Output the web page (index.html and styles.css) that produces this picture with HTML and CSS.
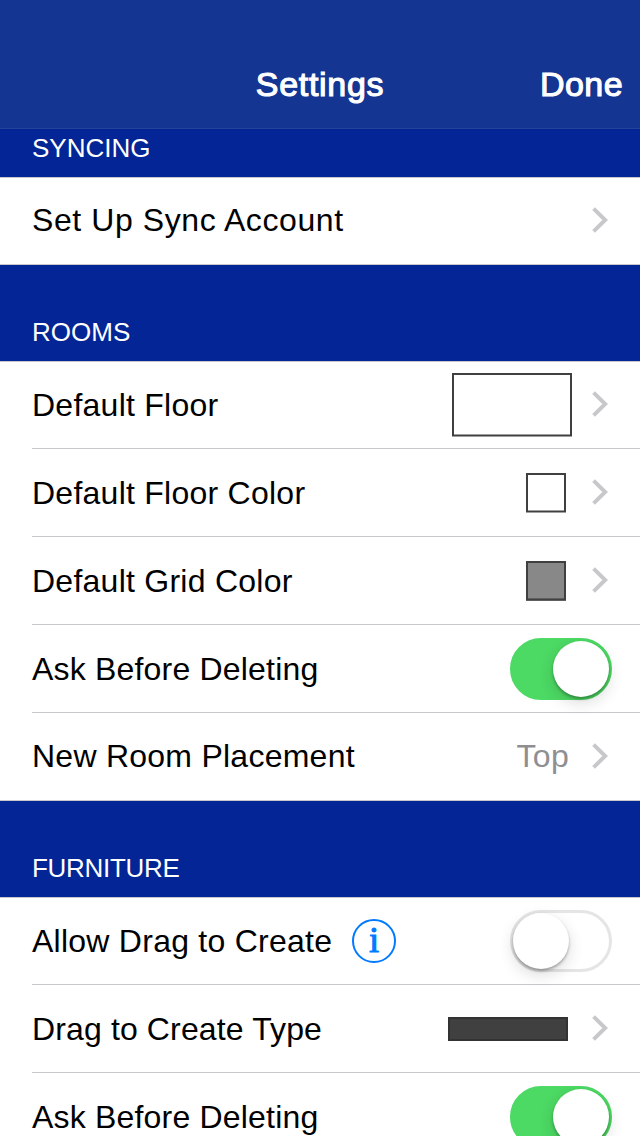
FILE: index.html
```
<!DOCTYPE html>
<html lang="en">
<head>
    <meta charset="UTF-8">
    <meta name="viewport" content="width=device-width, initial-scale=1.0">
    <title>Settings</title>
    <link rel="stylesheet" href="styles.css">
</head>
<body>
    <header class="navbar">
        <h1>Settings</h1>
        <button class="done">Done</button>
    </header>
    <main class="settings">
        <h2 class="first">SYNCING</h2>
        <div class="group">
            <div class="row"><span class="label sync">Set Up Sync Account</span><svg class="chevron" viewBox="0 0 16 26"><path d="M1.6 1.6L13.2 13 1.6 24.4"/></svg></div>
        </div>
        <h2>ROOMS</h2>
        <div class="group">
            <div class="row"><span class="label">Default Floor</span><span class="swatch floor"></span><svg class="chevron" viewBox="0 0 16 26"><path d="M1.6 1.6L13.2 13 1.6 24.4"/></svg></div>
            <div class="row"><span class="label">Default Floor Color</span><span class="swatch"></span><svg class="chevron" viewBox="0 0 16 26"><path d="M1.6 1.6L13.2 13 1.6 24.4"/></svg></div>
            <div class="row"><span class="label">Default Grid Color</span><span class="swatch grid"></span><svg class="chevron" viewBox="0 0 16 26"><path d="M1.6 1.6L13.2 13 1.6 24.4"/></svg></div>
            <div class="row"><span class="label ask">Ask Before Deleting</span><span class="switch on"></span></div>
            <div class="row"><span class="label">New Room Placement</span><span class="value">Top</span><svg class="chevron" viewBox="0 0 16 26"><path d="M1.6 1.6L13.2 13 1.6 24.4"/></svg></div>
        </div>
        <h2 class="furniture">FURNITURE</h2>
        <div class="group open">
            <div class="row"><span class="label">Allow Drag to Create</span><span class="info">i</span><span class="switch"></span></div>
            <div class="row"><span class="label type">Drag to Create Type</span><span class="swatch bar"></span><svg class="chevron" viewBox="0 0 16 26"><path d="M1.6 1.6L13.2 13 1.6 24.4"/></svg></div>
            <div class="row"><span class="label ask">Ask Before Deleting</span><span class="switch on"></span></div>
        </div>
    </main>
</body>
</html>
```

FILE: styles.css
```
* {
    box-sizing: border-box;
}
body {
    margin: 0;
    height: 1136px;
    overflow: hidden;
    background: #032595;
    font-family: "Liberation Sans", Arial, sans-serif;
    color: #000;
}
.navbar {
    display: grid;
    grid-template-columns: 1fr auto 1fr;
    align-items: center;
    height: 129px;
    padding: 40px 17px 0;
    background: #143592;
    border-bottom: 1px solid #24459b;
    color: #fff;
}
.navbar h1,
.done {
    font: normal 34px "Liberation Sans", Arial, sans-serif;
    letter-spacing: 0.7px;
    -webkit-text-stroke: 1.1px #fff;
}
.navbar h1 {
    grid-column: 2;
    margin: 0;
}
.done {
    justify-self: end;
    padding: 0;
    border: none;
    background: none;
    color: #fff;
    letter-spacing: 0.4px;
}
h2 {
    display: flex;
    align-items: flex-end;
    height: 96px;
    margin: 0;
    padding: 0 32px 13px;
    color: #fff;
    font-size: 26px;
    font-weight: normal;
}
h2.first {
    height: 48px;
}
h2.furniture {
    letter-spacing: -0.3px;
}
.group {
    background: #fff;
    box-shadow: inset 0 1px #c8c7cc, inset 0 -1px #c8c7cc;
}
.row {
    display: flex;
    align-items: center;
    height: 88px;
    margin-left: 32px;
    padding-right: 32px;
    border-bottom: 1px solid #c8c7cc;
    font-size: 32px;
}
.label {
    padding-top: 2px;
    letter-spacing: 0.25px;
}
.row:last-child .label {
    padding-top: 0;
}
.open .row:last-child .label {
    padding-top: 2px;
}
.label.sync {
    letter-spacing: 0.58px;
}
.label.ask {
    letter-spacing: 0.19px;
}
.label.type {
    letter-spacing: 0.13px;
}
.value {
    margin-left: auto;
    color: #8e8e93;
    letter-spacing: 0.3px;
}
/* bottom edge falls between two pixels */
.swatch {
    width: 40px;
    height: 39px;
    margin: 0 2px 1px auto;
    border: 2px solid #404040;
    border-bottom-width: 1px;
    box-shadow: inset 0 -1px #9f9f9f, 0 1px #9f9f9f;
}
.chevron {
    width: 16px;
    height: 26px;
    margin: 0 0 1px 24px;
    fill: none;
    stroke: #c7c7cc;
    stroke-width: 3.9;
}
.value + .chevron {
    margin-left: 23px;
}
.label + .chevron {
    margin-left: auto;
}
.floor {
    width: 120px;
    height: 63px;
    margin-right: -4px;
}
.grid {
    background: #888;
    box-shadow: inset 0 -1px #606060, 0 1px #606060;
}
.bar {
    width: 120px;
    height: 24px;
    margin: 0 0 0 auto;
    border: 2px solid #333;
    background: #404040;
    box-shadow: none;
}
.switch {
    display: flex;
    width: 102px;
    height: 62px;
    margin: 0 -4px 0 auto;
    border: 3px solid #e5e5e5;
    border-radius: 31px;
}
.switch.on {
    justify-content: flex-end;
    border-color: #4cd964;
    background: #4cd964;
}
.switch::after {
    content: "";
    width: 56px;
    height: 56px;
    border-radius: 50%;
    background: #fff;
    box-shadow: 0 2px 3px rgba(0, 0, 0, 0.3), 0 6px 16px rgba(0, 0, 0, 0.14);
}
.info {
    width: 44px;
    height: 44px;
    margin-left: 20px;
    border: 2px solid #007aff;
    border-radius: 50%;
    color: #007aff;
    font: 35px/39px "Liberation Serif", serif;
    -webkit-text-stroke: 1.2px #007aff;
    text-align: center;
}
```
